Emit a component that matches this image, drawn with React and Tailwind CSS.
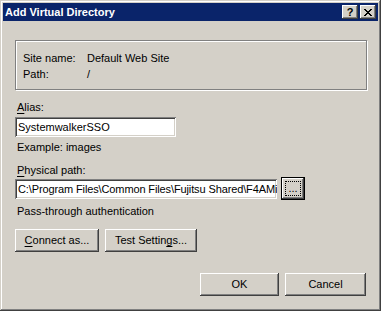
const raised =
  'shadow-[inset_-1px_-1px_#404040,inset_1px_1px_#ffffff,inset_-2px_-2px_#808080,inset_2px_2px_#d4d0c8]';
const sunken =
  'shadow-[inset_1px_1px_#808080,inset_-1px_-1px_#ffffff,inset_2px_2px_#404040,inset_-2px_-2px_#d4d0c8]';

function Button({ children, className = '' }) {
  return (
    <div
      className={`flex h-[23px] items-center justify-center bg-[#d4d0c8] text-[11px] text-black ${raised} ${className}`}
    >
      {children}
    </div>
  );
}

function CaptionButton({ children }) {
  return (
    <div className={`flex h-[14px] w-[16px] items-center justify-center bg-[#d4d0c8] ${raised}`}>
      {children}
    </div>
  );
}

export default function App() {
  return (
    <div
      className="h-[311px] w-[381px] bg-[#d4d0c8] p-[3px] text-black shadow-[inset_-1px_-1px_#404040,inset_1px_1px_#d4d0c8,inset_-2px_-2px_#808080,inset_2px_2px_#ffffff]"
      style={{ fontFamily: '"Liberation Sans", Arial, sans-serif' }}
    >
      {/* caption */}
      <div className="flex h-[18px] items-center justify-between bg-[#0a246a] pl-[2px] pr-[2px]">
        <span className="text-[11px] font-bold leading-none text-white">Add Virtual Directory</span>
        <div className="flex gap-[2px]">
          <CaptionButton>
            <span className="text-[11px] font-bold leading-none">?</span>
          </CaptionButton>
          <CaptionButton>
            <svg width="8" height="7" viewBox="0 0 8 7" shapeRendering="crispEdges">
              <path d="M0 0h2v1H0zM6 0h2v1H6zM1 1h2v1H1zM5 1h2v1H5zM2 2h4v1H2zM3 3h2v1H3zM2 4h4v1H2zM1 5h2v1H1zM5 5h2v1H5zM0 6h2v1H0zM6 6h2v1H6z" fill="#000" />
            </svg>
          </CaptionButton>
        </div>
      </div>

      {/* body */}
      <div className="flex flex-col pl-[12px] pt-[19px] text-[11px] leading-[13px]">
        <div className="h-[50px] w-[352px] border border-[#808080] pl-[7px] pt-[9px] shadow-[1px_1px_#ffffff,inset_1px_1px_#ffffff]">
          <div className="flex leading-[16px]">
            <span className="w-[64px]">Site name:</span>
            <span>Default Web Site</span>
          </div>
          <div className="flex leading-[16px]">
            <span className="w-[64px]">Path:</span>
            <span>/</span>
          </div>
        </div>

        <div className="mt-[11px] pl-[2px]">
          <span className="underline underline-offset-2">A</span>lias:
        </div>
        <div className={`mt-[3px] flex h-[20px] w-[161px] items-center bg-white pl-[3px] ${sunken}`}>
          SystemwalkerSSO
        </div>
        <div className="mt-[4px] pl-[2px]">Example: images</div>

        <div className="mt-[10px] pl-[2px]">
          <span className="underline underline-offset-2">P</span>hysical path:
        </div>
        <div className="flex items-start">
          <div className={`mt-[2px] flex h-[20px] w-[262px] items-center overflow-hidden whitespace-nowrap bg-white pl-[3px] tracking-[-0.12px] ${sunken}`}>
            C:\Program Files\Common Files\Fujitsu Shared\F4AMi
          </div>
          <div className="ml-[4px] h-[23px] w-[24px] border border-black">
            <div className={`flex h-full w-full items-center justify-center bg-[#d4d0c8] ${raised}`}>
              <div className="flex h-[15px] w-[16px] items-center justify-center border border-dotted border-black leading-none">
                ...
              </div>
            </div>
          </div>
        </div>
        <div className="mt-[5px] pl-[2px]">Pass-through authentication</div>

        <div className="mt-[11px] flex gap-[6px]">
          <Button className="w-[84px]">
            <span>
              <span className="underline underline-offset-2">C</span>onnect as...
            </span>
          </Button>
          <Button className="w-[92px]">
            <span>
              Test Settin<span className="underline underline-offset-2">g</span>s...
            </span>
          </Button>
        </div>

        <div className="mt-[21px] flex gap-[6px] pl-[185px]">
          <Button className="w-[79px]">OK</Button>
          <Button className="w-[81px]">Cancel</Button>
        </div>
      </div>
    </div>
  );
}
